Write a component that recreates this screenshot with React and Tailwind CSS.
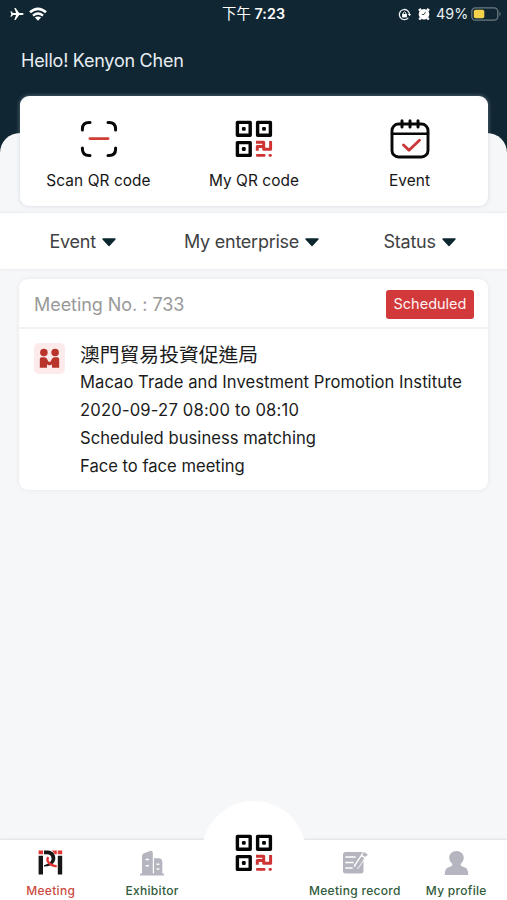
function Line({ className = '', children }) {
  return <div className={`whitespace-nowrap ${className}`}>{children}</div>;
}

function QrIcon() {
  return (
    <svg width="38" height="38" viewBox="0 0 38 38" fill="none" className="block shrink-0">
      <g stroke="#050505" strokeWidth="3.4" strokeLinejoin="round">
        <rect x="2.4" y="2.4" width="12.8" height="12.8" />
        <rect x="22.6" y="2.4" width="12.8" height="12.8" />
        <rect x="2.4" y="22.6" width="12.8" height="12.8" />
      </g>
      <g fill="#050505">
        <rect x="6.9" y="6.9" width="3.8" height="3.8" rx="1.2" />
        <rect x="27.1" y="6.9" width="3.8" height="3.8" rx="1.2" />
        <rect x="6.9" y="27.1" width="3.8" height="3.8" rx="1.2" />
      </g>
      <path d="M21 22.3H28.7V29.3H35.6V21M22.3 30.8V26.6H28.7" stroke="#cf3435" strokeWidth="3" strokeLinejoin="round" />
      <path d="M22.3 35.4H29.2M34.9 35.4H35.5" stroke="#cf3435" strokeWidth="2.8" strokeLinecap="round" />
    </svg>
  );
}

function ScanIcon() {
  return (
    <svg width="38" height="38" viewBox="0 0 38 38" fill="none" strokeLinecap="round" className="block">
      <path d="M2.4 10V9Q2.4 2.4 9 2.4H10M28 2.4H29Q35.6 2.4 35.6 9V10M35.6 28V29Q35.6 35.6 29 35.6H28M10 35.6H9Q2.4 35.6 2.4 29V28" stroke="#080808" strokeWidth="3" />
      <path d="M10 18.6H28" stroke="#cf3e34" strokeWidth="2.9" />
    </svg>
  );
}

function EventIcon() {
  return (
    <svg width="40" height="40" viewBox="0 0 40 40" fill="none" strokeLinecap="round" strokeLinejoin="round" className="block">
      <rect x="2" y="5" width="36" height="33" rx="6.5" stroke="#080808" strokeWidth="2.9" />
      <path d="M2 14.8H38" stroke="#080808" strokeWidth="2.6" />
      <path d="M12 1.8V8M20 1.8V8M28 1.8V8" stroke="#080808" strokeWidth="3" />
      <path d="M13.5 26L19 31.3L29.5 21.2" stroke="#cb393a" strokeWidth="2.9" />
    </svg>
  );
}

function StatusBar() {
  return (
    <div className="flex h-7 items-center text-white">
      <div className="flex w-[222px] items-center pl-[10px]">
        <svg width="14" height="14" viewBox="0 0 14 14" fill="#fff">
          <path d="M13.7 7Q13.5 6 12 6H9.2L5.6 1H4.3L6.1 6H3L1.4 4.2H.4L1.3 7L.4 9.8H1.4L3 8H6.1L4.3 13H5.6L9.2 8H12Q13.5 8 13.7 7Z" />
        </svg>
        <svg width="18" height="15" viewBox="0 0 18 15" fill="none" stroke="#fff" className="ml-[5px]">
          <path d="M1 5.3Q9-1.7 17 5.3" strokeWidth="2.6" />
          <path d="M4 8.6Q9 4.5 14 8.6" strokeWidth="2.4" />
          <path d="M5.9 10.6Q9 8.2 12.1 10.6L9 13.8Z" fill="#fff" stroke="none" />
        </svg>
      </div>
      <Line className="w-[176px] text-[14.3px] font-semibold tracking-[0.1px]"><span className="font-normal">下午</span> 7:23</Line>
      <svg width="13" height="13" viewBox="0 0 13 13" fill="none" stroke="#eef1f3" strokeWidth="1.3">
        <path d="M10.3 9.9A5.1 5.1 0 1 1 11.5 6.5" />
        <path d="M9.8 6L11.6 8.2L13 6Z" fill="#fff" stroke="none" />
        <rect x="4.1" y="6" width="4.8" height="3.4" fill="#fff" stroke="none" />
        <path d="M5.1 6V5Q6.5 2.7 7.9 5V6" strokeWidth="1" />
      </svg>
      <svg width="14" height="14" viewBox="0 0 14 14" className="ml-[6px]">
        <circle cx="7" cy="7.2" r="5.3" fill="#fff" />
        <path d="M1.8 3.7L4 1.9M12.2 3.7L10 1.9M3.5 11L2.3 12.7M10.5 11L11.7 12.7" stroke="#fff" strokeWidth="2.2" />
        <path d="M8.6 4.8L7 7.5H4.8" fill="none" stroke="#102733" strokeWidth=".8" />
      </svg>
      <Line className="ml-[5px] w-[35px] text-[14.3px] tracking-[0.1px] text-[#e7edf2]">49%</Line>
      <svg width="31" height="14" viewBox="0 0 31 14" className="shrink-0">
        <rect x=".8" y=".8" width="26" height="12.4" rx="3.6" fill="none" stroke="#6b7a81" strokeWidth="1.3" />
        <rect x="2.8" y="2.7" width="10.5" height="8.6" rx="1.7" fill="#f4d34b" />
        <path d="M28.5 4.8Q31 7 28.5 9.2Z" fill="#6b7a81" />
      </svg>
    </div>
  );
}

function Action({ icon, label }) {
  return (
    <div className="flex w-[155.5px] flex-col items-center">
      <div className="flex h-10 items-center">{icon}</div>
      <Line className="mt-[12px] text-[15.4px] leading-5 tracking-[0.08px] text-[#161616]">{label}</Line>
    </div>
  );
}

function Filter({ label, className }) {
  return (
    <div className={`flex items-center gap-[6px] ${className}`}>
      <Line className="text-[18px] leading-6 tracking-[-0.25px] text-[#404142]">{label}</Line>
      <svg width="14" height="9" viewBox="0 0 14 9" fill="#0d2730" stroke="#0d2730" strokeWidth="1.4" strokeLinejoin="round">
        <path d="M1 1H13L7 7.5Z" />
      </svg>
    </div>
  );
}

function PartnersIcon() {
  return (
    <svg width="31" height="31" viewBox="0 0 32 32" className="block rounded-[5px] bg-[#fdebec]" fill="#b9342a">
      <circle cx="10.2" cy="9.8" r="3.9" />
      <circle cx="21.8" cy="9.8" r="3.9" />
      <path d="M6 25.5V16.6Q6 14.6 8 14.6H11Q12.6 14.6 13.4 16.2L15 19.4H17L18.6 16.2Q19.4 14.6 21 14.6H24Q26 14.6 26 16.6V25.5H18.6V22L17 23H15L13.4 22V25.5Z" />
    </svg>
  );
}

function MeetingIcon() {
  return (
    <svg width="25" height="25" viewBox="0 0 25 25" fill="none" className="block">
      <path d="M.6.5H5V4.3H.6ZM19.8.5H24.2V4.3H19.8ZM14 .5H18.8V4.3H17Z" fill="#df3434" />
      <path d="M.6 5.8H5V24.5H.6ZM19.8 5.8H24.2V24.5H19.8Z" fill="#161616" />
      <path d="M6 .5H10C14.5 .8 17.3 4 17.3 8C17.3 12 14.5 15.5 9.5 16.2L6 16.6V15.2C10.5 14 13.6 11.8 13.6 8.5C13.6 5.5 11.5 4.3 9 4.2H6Z" fill="#161616" />
      <path d="M10.2 7.2Q8.3 10 11 13Q13.5 15.9 18.7 16.4" stroke="#df3434" strokeWidth="2.3" />
    </svg>
  );
}

function ExhibitorIcon() {
  return (
    <svg width="26" height="26" viewBox="0 0 26 26" fill="#b5b5bf" className="block">
      <path d="M1 23.5H3V6Q3 4 5 3.2L11 1Q13.8 .2 13.8 3V23.5H15V8.3H19.5Q23.3 8.3 23.3 12V23.5H25V25.5H1Z" />
      <path d="M6.5 9.5H10M6.5 15.7H10M17.6 14.3H20.4M17.6 19H20.4" stroke="#fff" strokeWidth="1.5" />
    </svg>
  );
}

function RecordIcon() {
  return (
    <svg width="26" height="25" viewBox="0 0 26 25" fill="none" className="block">
      <rect x="1" y="2" width="20.5" height="21.5" rx="2.5" fill="#b5b5bf" />
      <path d="M4 7H13M4 12.5H11M4 18H10" stroke="#fff" strokeWidth="1.7" strokeLinecap="round" />
      <path d="M13.8 17.5L22.5 4.5" stroke="#fff" strokeWidth="5.6" />
      <path d="M14.6 17L20.9 7.4M21.8 6L23.2 3.8" stroke="#b5b5bf" strokeWidth="3.4" />
      <path d="M12.5 20L13.2 16L16 17.9Z" fill="#b5b5bf" />
      <path d="M21.5 2.8L25.3 5.2" stroke="#b5b5bf" strokeWidth="1.7" />
    </svg>
  );
}

function ProfileIcon() {
  return (
    <svg width="25" height="26" viewBox="0 0 25 26" fill="#b5b5bf" className="block">
      <path d="M12.5 1C8.2 1 5.2 4 5.2 8Q5.2 11.5 8.3 14Q8.8 15.6 7.2 16.2L3.5 17.8Q.7 19.5.7 25H24.3Q24.3 19.5 21.5 17.8L17.8 16.2Q16.2 15.6 16.7 14Q19.8 11.5 19.8 8C19.8 4 16.8 1 12.5 1Z" />
    </svg>
  );
}

function Tab({ icon, label, color = 'text-[#315b3c]' }) {
  return (
    <div className="flex w-[101.4px] flex-col items-center pt-[9px]">
      <div className="flex h-[27px] items-center">{icon}</div>
      <Line className={`mt-[7px] text-[12px] font-medium leading-4 tracking-[0.3px] ${color}`}>{label}</Line>
    </div>
  );
}

export default function App() {
  return (
    <div className="flex h-[900px] w-[507px] flex-col overflow-hidden bg-[#f6f7f9] font-['Inter','Noto_Sans_CJK_TC',sans-serif]">
      <header className="h-[213px] shrink-0 bg-[linear-gradient(#102733_0_160px,#f6f7f9_160px)]">
        <StatusBar />
        <Line className="ml-[21px] mt-[21px] text-[18px] leading-6 tracking-[-0.25px] text-[#e7edf2]">Hello! Kenyon Chen</Line>
        <div className="mt-[60px] h-[80px] rounded-t-[20px] bg-[#f6f7f9]">
          <section className="relative -top-[37px] ml-5 mr-[19px] flex h-[110px] justify-center rounded-[9px] bg-white pt-[22.5px] shadow-[0_0_4px_rgba(180,190,200,0.5)]">
            <Action icon={<ScanIcon />} label="Scan QR code" />
            <Action icon={<QrIcon />} label="My QR code" />
            <Action icon={<EventIcon />} label="Event" />
          </section>
        </div>
      </header>

      <nav className="flex h-[56px] shrink-0 items-center bg-white pt-[2px] shadow-[0_0_3px_#dfe1e3]">
        <Filter label="Event" className="ml-[49.5px] w-[134.5px]" />
        <Filter label="My enterprise" className="w-[199.5px]" />
        <Filter label="Status" className="" />
      </nav>

      <main className="flex-1 px-[19px] pt-[10px]">
        <article className="h-[211px] rounded-[9px] bg-white shadow-[0_0_4px_#e4e6e9]">
          <div className="flex h-[50px] items-center justify-between border-b-2 border-[#f1f2f3] pl-[15px] pr-[14px] pt-[2px]">
            <Line className="text-[18px] tracking-[-0.05px] text-[#999]">Meeting No. : 733</Line>
            <div className="flex h-[29px] w-[88px] items-center justify-center rounded-[3px] bg-[#d2393b]">
              <Line className="text-[14.5px] text-[#fff2f2]">Scheduled</Line>
            </div>
          </div>
          <div className="flex pl-[15px] pt-[14px]">
            <PartnersIcon />
            <div className="ml-[15px] text-[16.6px] leading-[28px] text-[#1b1b1b]">
              <Line className="text-[19.8px] leading-[25px]">澳門貿易投資促進局</Line>
              <Line className="tracking-[0.04px]">Macao Trade and Investment Promotion Institute</Line>
              <Line className="tracking-[0.18px]">2020-09-27 08:00 to 08:10</Line>
              <Line className="tracking-[0.04px]">Scheduled business matching</Line>
              <Line>Face to face meeting</Line>
            </div>
          </div>
        </article>
      </main>

      <footer className="relative flex h-[60px] shrink-0 bg-white shadow-[0_-1px_2px_#dedfe1]">
        <div className="absolute -top-[39px] left-[202px] h-[60px] w-[104px] rounded-t-[52px] bg-white" />
        <Tab icon={<MeetingIcon />} label="Meeting" color="text-[#cc4b40]" />
        <Tab icon={<ExhibitorIcon />} label="Exhibitor" />
        <div className="relative -top-[6px] flex w-[101.4px] justify-center pl-[2px]"><QrIcon /></div>
        <Tab icon={<RecordIcon />} label="Meeting record" />
        <Tab icon={<ProfileIcon />} label="My profile" />
      </footer>
    </div>
  );
}
